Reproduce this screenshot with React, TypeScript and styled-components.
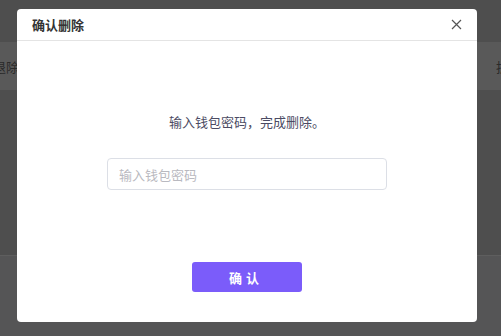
import React from "react";
import styled, { createGlobalStyle } from "styled-components";

const Global = createGlobalStyle`
  html, body { margin: 0; padding: 0; }
  body {
    width: 501px;
    height: 336px;
    overflow: hidden;
    font-family: "Noto Sans CJK SC", "Noto Sans", sans-serif;
    background: #4f4f4f;
  }
`;

const Page = styled.div`
  position: relative;
  width: 501px;
  height: 336px;
  display: flex;
  flex-direction: column;
  background: #4f4f4f;
`;

const TopBar = styled.div`
  height: 42px;
  background: #4e4e4e;
`;

const Band = styled.div`
  height: 48px;
  background: #595959;
  display: flex;
  align-items: center;
  justify-content: space-between;
  font-size: 13px;
  color: #2a2a2a;
`;

const BandText = styled.span`
  margin-left: -7px;
`;

const BandTextRight = styled.span`
  margin-right: -8px;
`;

const Content = styled.div`
  height: 165px;
  background: #4e4e4e;
  border-bottom: 1px solid #5e5e5e;
`;

const Footer = styled.div`
  flex: 1;
  background: #555556;
`;

const Overlay = styled.div`
  position: absolute;
  inset: 0;
  display: flex;
  align-items: flex-start;
  justify-content: flex-start;
  padding: 9px 0 0 17px;
  box-sizing: border-box;
`;

const Modal = styled.div`
  width: 460px;
  height: 313px;
  background: #ffffff;
  border-radius: 4px;
  display: flex;
  flex-direction: column;
  overflow: hidden;
`;

const Header = styled.div`
  height: 31px;
  border-bottom: 1px solid #e4e4e4;
  display: flex;
  align-items: center;
  justify-content: space-between;
  padding: 0 14px 0 15px;
`;

const Title = styled.div`
  font-size: 13px;
  font-weight: 700;
  color: #333;
`;

const Close = styled.button`
  border: none;
  background: none;
  padding: 0;
  width: 14px;
  height: 14px;
  display: flex;
  align-items: center;
  justify-content: center;
  cursor: pointer;
`;

const Body = styled.div`
  flex: 1;
  display: flex;
  flex-direction: column;
  align-items: center;
  padding-top: 72px;
`;

const Hint = styled.div`
  font-size: 13px;
  color: #4b4b63;
  line-height: 18px;
`;

const Input = styled.input`
  margin-top: 27px;
  width: 280px;
  height: 32px;
  box-sizing: border-box;
  border: 1px solid #dcdfe6;
  border-radius: 4px;
  padding: 0 11px;
  font-family: inherit;
  font-size: 13px;
  color: #333;
  outline: none;
  &::placeholder {
    color: #b9b9c0;
  }
`;

const Button = styled.button`
  margin-top: 72px;
  width: 110px;
  height: 30px;
  border: none;
  border-radius: 3px;
  background: #7b5cfa;
  color: #fff;
  font-family: inherit;
  font-size: 13px;
  font-weight: 700;
  letter-spacing: 4px;
  padding-left: 4px;
  cursor: pointer;
`;

export default function App() {
  return (
    <>
      <Global />
      <Page>
        <TopBar />
        <Band>
          <BandText>退除</BandText>
          <BandTextRight>拆</BandTextRight>
        </Band>
        <Content />
        <Footer />
        <Overlay>
          <Modal>
            <Header>
              <Title>确认删除</Title>
              <Close aria-label="close">
                <svg width="11" height="11" viewBox="0 0 11 11">
                  <path d="M1 1L10 10M10 1L1 10" stroke="#555" strokeWidth="1.2" />
                </svg>
              </Close>
            </Header>
            <Body>
              <Hint>输入钱包密码，完成删除。</Hint>
              <Input placeholder="输入钱包密码" type="password" />
              <Button>确认</Button>
            </Body>
          </Modal>
        </Overlay>
      </Page>
    </>
  );
}
